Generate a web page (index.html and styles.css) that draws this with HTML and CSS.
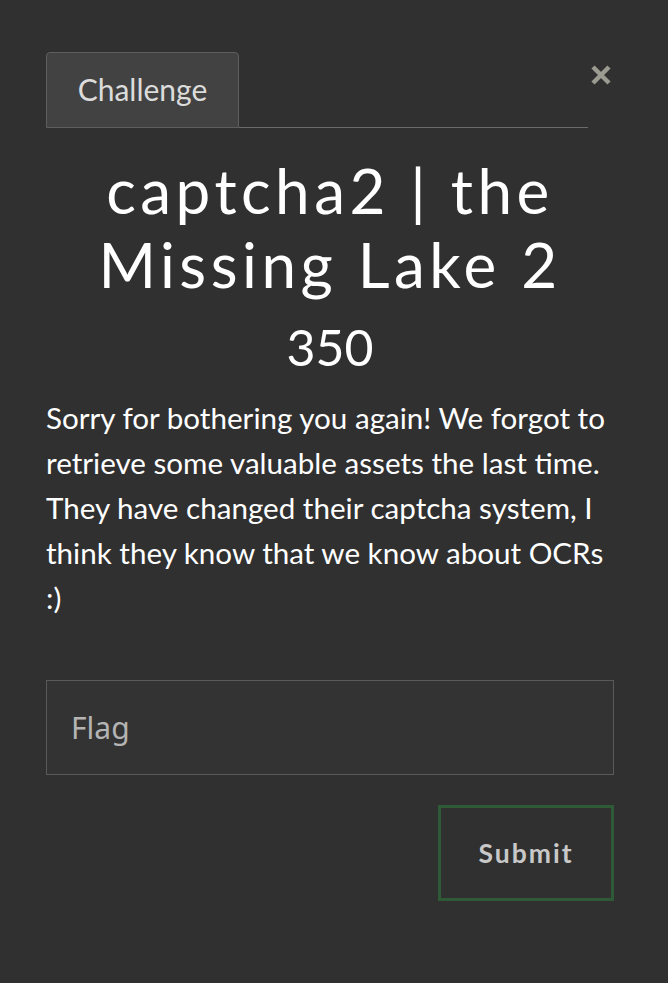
FILE: index.html
```html
<!DOCTYPE html>
<html>
<head>
<meta charset="utf-8">
<link rel="stylesheet" href="styles.css">
</head>
<body>
<div class="modal">
  <div class="tabs">
    <div class="tab">Challenge</div>
    <div class="tab-line"></div>
    <button class="close" aria-label="Close">
      <svg width="22" height="22" viewBox="0 0 22 22"><path d="M3 3 L19 19 M19 3 L3 19" stroke="#9b9b92" stroke-width="4.5" stroke-linecap="butt"/></svg>
    </button>
  </div>
  <h1 class="title">captcha2 | the Missing Lake 2</h1>
  <div class="points">350</div>
  <p class="desc">Sorry for bothering you again! We forgot to retrieve some valuable assets the last time. They have changed their captcha system, I think they know that we know about OCRs :)</p>
  <form class="flag-form">
    <input class="flag-input" type="text" placeholder="Flag">
    <div class="actions">
      <button class="submit" type="button">Submit</button>
    </div>
  </form>
</div>
</body>
</html>
```
FILE: styles.css
```css
html, body {
  margin: 0;
  padding: 0;
  background: #303030;
}
body {
  font-family: Lato, "Liberation Sans", sans-serif;
  color: #fff;
}
.modal {
  width: 568px;
  margin: 0 0 0 46px;
  padding-top: 52px;
}
.tabs {
  display: flex;
  align-items: flex-end;
  position: relative;
  width: 542px;
}
.tab {
  width: 193px;
  height: 76px;
  box-sizing: border-box;
  border: 1px solid #5e5e5e;
  border-radius: 4px 4px 0 0;
  background: #424242;
  color: #dcdcdc;
  font-size: 30px;
  display: flex;
  align-items: center;
  justify-content: center;
  padding-bottom: 2px;
}
.tab-line {
  flex: 1;
  border-bottom: 1px solid #6a6a6a;
}
.close {
  position: absolute;
  right: -24px;
  top: 12px;
  background: none;
  border: none;
  padding: 0;
  width: 22px;
  height: 22px;
  display: block;
}
.close svg { display: block; }
.title {
  margin: 25px 0 0;
  text-align: center;
  font-weight: 400;
  font-size: 62px;
  line-height: 74px;
  letter-spacing: 4.5px;
  color: #fff;
}
.points {
  text-align: center;
  font-size: 50px;
  line-height: 64px;
  margin-top: 14px;
}
.desc {
  margin: 16px 0 0;
  font-size: 29.6px;
  line-height: 45px;
  color: #fff;
}
.flag-form {
  margin-top: 60px;
}
.flag-input {
  display: block;
  width: 100%;
  height: 95px;
  box-sizing: border-box;
  background: #333;
  border: 1px solid #5a5a5a;
  padding: 0 24px;
  font-family: "Noto Sans", sans-serif;
  font-size: 30px;
  color: #ccc;
  outline: none;
}
.flag-input::placeholder {
  color: #b4b4b4;
}
.actions {
  display: flex;
  justify-content: flex-end;
  margin-top: 30px;
}
.submit {
  width: 176px;
  height: 96px;
  box-sizing: border-box;
  background: transparent;
  border: 3px solid #2f5a38;
  color: #c8c8c8;
  font-family: Lato, sans-serif;
  font-weight: 700;
  font-size: 26.5px;
  letter-spacing: 2px;
}
```
